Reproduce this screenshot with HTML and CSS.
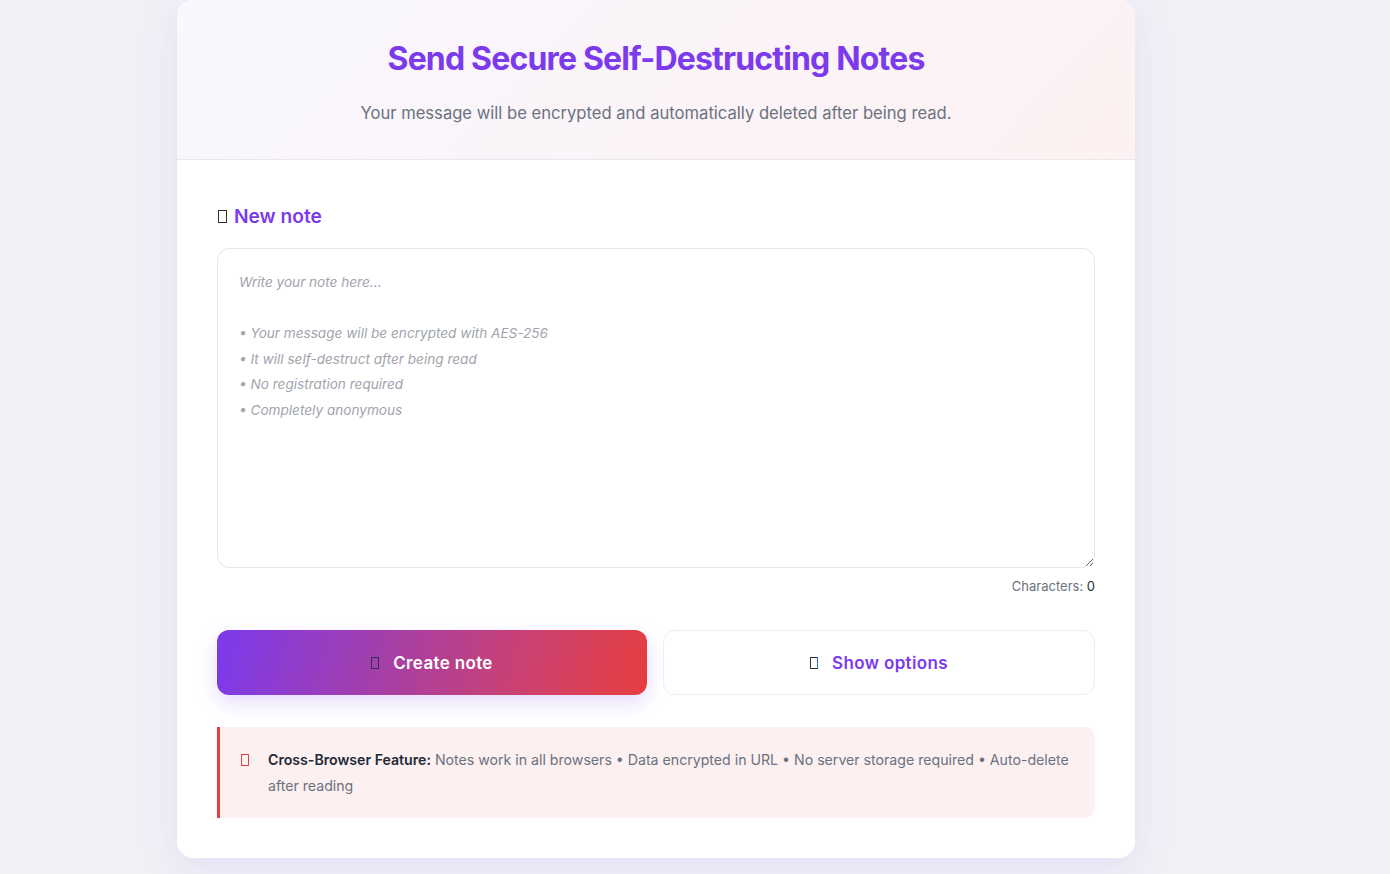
FILE: index.html
```html
<!DOCTYPE html>
<html lang="en">
<head>
<meta charset="utf-8">
<title>Secure Notes</title>
<link rel="stylesheet" href="styles.css">
</head>
<body>
<main class="card">
  <header class="hero">
    <h1 class="title">Send Secure Self-Destructing Notes</h1>
    <p class="subtitle">Your message will be encrypted and automatically deleted after being read.</p>
  </header>
  <section class="body">
    <h2 class="section-title"><span class="tofu tofu-dark"></span>New note</h2>
    <textarea class="note" placeholder="Write your note here...

• Your message will be encrypted with AES-256
• It will self-destruct after being read
• No registration required
• Completely anonymous"></textarea>
    <div class="counter">Characters: <span class="count">0</span></div>
    <div class="actions">
      <button class="btn btn-primary"><span class="tofu tofu-navy"></span>Create note</button>
      <button class="btn btn-secondary"><span class="tofu tofu-dark2"></span>Show options</button>
    </div>
    <div class="info">
      <span class="tofu tofu-red"></span>
      <p class="info-text"><strong>Cross-Browser Feature:</strong> Notes work in all browsers • Data encrypted in URL • No server storage required • Auto-delete after reading</p>
    </div>
  </section>
</main>
</body>
</html>
```
FILE: styles.css
```css
* { box-sizing: border-box; }
html, body { margin: 0; padding: 0; }
body {
  background: #f0f1f6;
  font-family: Inter, "Noto Sans", sans-serif;
  color: #374151;
  min-height: 874px;
  padding-right: 78px;
}
.card {
  width: 958px;
  margin: 0 auto;
  background: #fff;
  border-radius: 16px;
  box-shadow: 0 10px 40px rgba(124, 58, 237, 0.10);
  overflow: hidden;
}
.hero {
  background: linear-gradient(135deg, #f8f8ff 0%, #fbf4f8 50%, #fdf1f1 100%);
  border-bottom: 1px solid #e7e7ec;
  text-align: center;
  height: 160px;
  padding-top: 38px;
}
.title {
  margin: 0;
  font-size: 32px;
  font-weight: 700;
  letter-spacing: -0.83px;
  line-height: 42px;
  color: #7c3aed;
}
.subtitle {
  margin: 21px 0 0;
  font-size: 16.6px;
  line-height: 24px;
  color: #6b7280;
}
.body {
  padding: 44px 40px 40px;
}
.section-title {
  margin: 0;
  display: flex;
  align-items: center;
  font-size: 19.2px;
  font-weight: 600;
  line-height: 24px;
  color: #7c3aed;
}
.tofu {
  display: inline-block;
  width: 9px;
  height: 13px;
  border: 1px solid #3b2a2a;
  flex: none;
}
.section-title .tofu { margin: 0 7px 0 1px; }
.tofu-navy { border-color: #2b2f5c; }
.tofu-dark2 { border-color: #2d3340; border-right-color: #2a6fd6; }
.tofu-red { border-color: #e53e3e; }
.note {
  display: block;
  width: 100%;
  height: 320px;
  margin-top: 20px;
  padding: 21px 21px;
  border: 1px solid #e5e7eb;
  border-radius: 12px;
  font-family: Inter, "Noto Sans", sans-serif;
  font-size: 13.6px;
  line-height: 25.5px;
  color: #374151;
  resize: vertical;
  outline: none;
}
.note::placeholder {
  color: #a0a4ad;
  font-style: italic;
}
.counter {
  margin-top: 10px;
  text-align: right;
  font-size: 13px;
  line-height: 16px;
  color: #6b7280;
}
.count { color: #1f2937; }
.actions {
  display: grid;
  grid-template-columns: 430px 1fr;
  gap: 16px;
  margin-top: 36px;
}
.btn {
  height: 65px;
  border-radius: 12px;
  font-family: Inter, "Noto Sans", sans-serif;
  font-size: 17px;
  font-weight: 600;
  letter-spacing: 0.35px;
  display: flex;
  align-items: center;
  justify-content: center;
  gap: 14px;
  cursor: pointer;
}
.btn-primary {
  border: none;
  color: #fff;
  background: linear-gradient(105deg, #7c3aed 0%, #a63fa6 40%, #d0416a 75%, #e53e3e 100%);
  box-shadow: 0 8px 20px rgba(124, 58, 237, 0.18);
}
.btn-secondary {
  background: #fff;
  border: 1px solid #efecfc;
  color: #7c3aed;
}
.btn .tofu { width: 8px; height: 12px; }
.info {
  margin-top: 32px;
  display: flex;
  align-items: flex-start;
  gap: 19px;
  background: #fcf0f0;
  border-left: 3px solid #e53e3e;
  border-radius: 0 10px 10px 0;
  padding: 20px 16px 19px 21px;
}
.info .tofu {
  width: 8px;
  height: 12px;
  margin-top: 7px;
}
.info-text {
  margin: 0;
  font-size: 14.15px;
  line-height: 26px;
  color: #6b7280;
}
.info-text strong { color: #1f2937; font-weight: 600; }
```
